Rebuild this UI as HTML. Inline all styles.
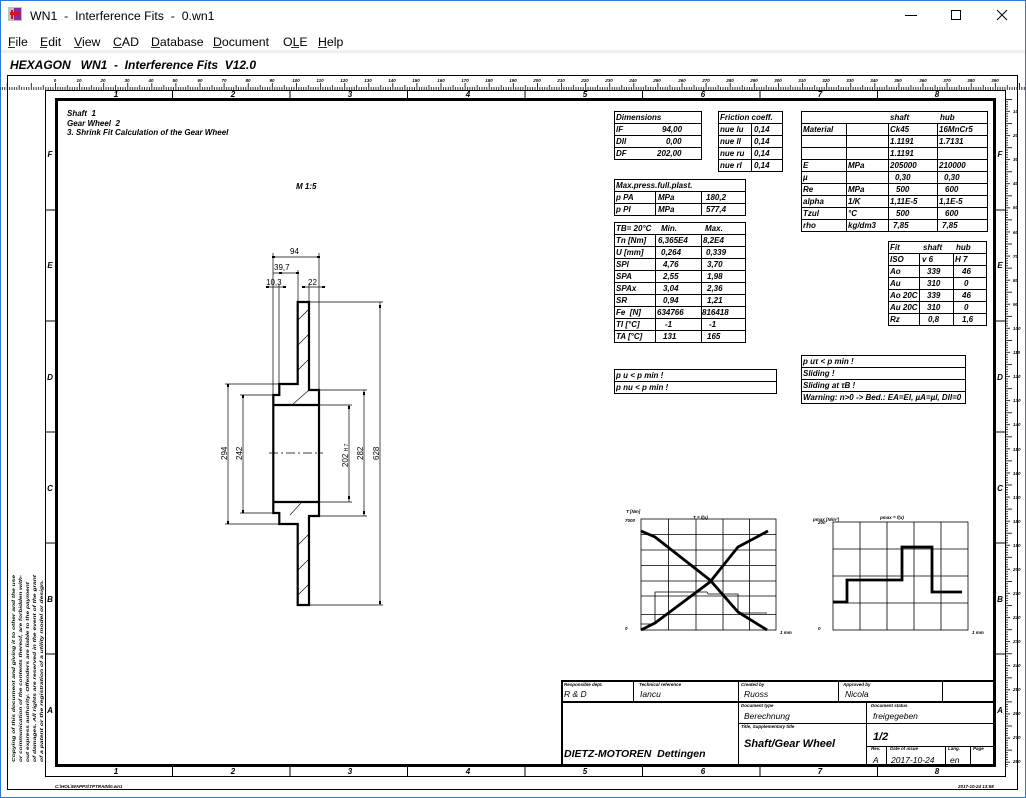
<!DOCTYPE html>
<html><head><meta charset="utf-8"><style>
html,body{margin:0;padding:0;background:#fff;width:1026px;height:798px;overflow:hidden}
svg{display:block}
text{font-family:"Liberation Sans",sans-serif;white-space:pre}
.t{font-size:8px;font-style:italic;font-weight:bold}
.s{font-size:4.5px;font-style:italic;font-weight:bold}
.m{font-size:12.3px}
</style></head><body>
<svg width="1026" height="798" viewBox="0 0 1026 798" xmlns="http://www.w3.org/2000/svg" xml:space="preserve">
<defs>
<pattern id="rt" patternUnits="userSpaceOnUse" x="55" y="0" width="24.1" height="100">
<g stroke="#000" stroke-width="0.8">
<line x1="0.4" y1="83" x2="0.4" y2="90"/><line x1="12.45" y1="85" x2="12.45" y2="90"/>
<line x1="2.81" y1="87" x2="2.81" y2="90"/><line x1="5.22" y1="87" x2="5.22" y2="90"/><line x1="7.63" y1="87" x2="7.63" y2="90"/><line x1="10.04" y1="87" x2="10.04" y2="90"/>
<line x1="14.86" y1="87" x2="14.86" y2="90"/><line x1="17.27" y1="87" x2="17.27" y2="90"/><line x1="19.68" y1="87" x2="19.68" y2="90"/><line x1="22.09" y1="87" x2="22.09" y2="90"/>
</g></pattern>
<pattern id="rr" patternUnits="userSpaceOnUse" x="0" y="99" width="1026" height="24.1">
<g stroke="#000" stroke-width="0.8">
<line x1="1005" y1="0.4" x2="1012" y2="0.4"/><line x1="1005" y1="12.45" x2="1010" y2="12.45"/>
<line x1="1005" y1="2.81" x2="1008" y2="2.81"/><line x1="1005" y1="5.22" x2="1008" y2="5.22"/><line x1="1005" y1="7.63" x2="1008" y2="7.63"/><line x1="1005" y1="10.04" x2="1008" y2="10.04"/>
<line x1="1005" y1="14.86" x2="1008" y2="14.86"/><line x1="1005" y1="17.27" x2="1008" y2="17.27"/><line x1="1005" y1="19.68" x2="1008" y2="19.68"/><line x1="1005" y1="22.09" x2="1008" y2="22.09"/>
</g></pattern>
</defs>
<rect x="0.5" y="0.5" width="1025" height="797" fill="#fff" stroke="#2b79d6"/>
<rect x="8" y="7" width="14" height="14" fill="#c0c0c0"/>
<rect x="14" y="8" width="7" height="12" fill="#8a2a9a"/>
<rect x="10" y="12" width="10" height="3" fill="#e01010"/>
<rect x="11" y="10" width="2" height="9" fill="#e01010"/>
<text x="30" y="20" class="m" font-size="13" fill="#000">WN1  -  Interference Fits  -  0.wn1</text>
<line x1="905" y1="15.5" x2="917" y2="15.5" stroke="#000"/>
<rect x="951.5" y="10.5" width="9" height="9" fill="none" stroke="#000"/>
<path d="M997 10 L1007 20 M1007 10 L997 20" stroke="#000"/>
<g class="m" fill="#000">
<text x="8" y="46">File</text><text x="40" y="46">Edit</text><text x="74" y="46">View</text><text x="113" y="46">CAD</text><text x="151" y="46">Database</text><text x="213" y="46">Document</text><text x="283" y="46">OLE</text><text x="318" y="46">Help</text>
</g>
<g stroke="#000" stroke-width="0.8"><line x1="8" y1="47.5" x2="15" y2="47.5"/><line x1="40" y1="47.5" x2="47" y2="47.5"/><line x1="74" y1="47.5" x2="82" y2="47.5"/><line x1="113" y1="47.5" x2="122" y2="47.5"/><line x1="151" y1="47.5" x2="160" y2="47.5"/><line x1="213" y1="47.5" x2="222" y2="47.5"/><line x1="291" y1="47.5" x2="299" y2="47.5"/><line x1="318" y1="47.5" x2="327" y2="47.5"/></g>
<rect x="1" y="50" width="1024" height="3" fill="#f0f0f0"/>
<text x="10" y="69" font-size="12" font-style="italic" font-weight="bold">HEXAGON   WN1  -  Interference Fits  V12.0</text>
<rect x="7.5" y="75.5" width="1010" height="714" fill="none" stroke="#000"/>
<rect x="0" y="78" width="1026" height="13" fill="url(#rt)"/>
<line x1="55" y1="90.5" x2="995" y2="90.5" stroke="#000"/>
<rect x="990" y="99" width="30" height="668" fill="url(#rr)"/>
<line x1="1005.5" y1="99" x2="1005.5" y2="776" stroke="#000"/>
<rect x="45.5" y="90.5" width="960" height="686" fill="none" stroke="#000"/>
<rect x="56.5" y="99.5" width="938" height="666" fill="none" stroke="#000" stroke-width="3"/>
<g stroke="#000" stroke-width="1">
<line x1="172.5" y1="91" x2="172.5" y2="99"/><line x1="290" y1="91" x2="290" y2="99"/><line x1="407.5" y1="91" x2="407.5" y2="99"/><line x1="525" y1="91" x2="525" y2="99"/><line x1="642.5" y1="91" x2="642.5" y2="99"/><line x1="760" y1="91" x2="760" y2="99"/><line x1="877.5" y1="91" x2="877.5" y2="99"/>
<line x1="172.5" y1="767" x2="172.5" y2="776"/><line x1="290" y1="767" x2="290" y2="776"/><line x1="407.5" y1="767" x2="407.5" y2="776"/><line x1="525" y1="767" x2="525" y2="776"/><line x1="642.5" y1="767" x2="642.5" y2="776"/><line x1="760" y1="767" x2="760" y2="776"/><line x1="877.5" y1="767" x2="877.5" y2="776"/>
<line x1="45" y1="210" x2="55" y2="210"/><line x1="45" y1="321" x2="55" y2="321"/><line x1="45" y1="432" x2="55" y2="432"/><line x1="45" y1="543" x2="55" y2="543"/><line x1="45" y1="654" x2="55" y2="654"/>
<line x1="996" y1="210" x2="1005" y2="210"/><line x1="996" y1="321" x2="1005" y2="321"/><line x1="996" y1="432" x2="1005" y2="432"/><line x1="996" y1="543" x2="1005" y2="543"/><line x1="996" y1="654" x2="1005" y2="654"/>
</g>
<g class="t" font-size="6.5" text-anchor="middle">
<text x="116" y="97">1</text><text x="233" y="97">2</text><text x="350" y="97">3</text><text x="468" y="97">4</text><text x="585" y="97">5</text><text x="703" y="97">6</text><text x="820" y="97">7</text><text x="937" y="97">8</text>
<text x="116" y="774">1</text><text x="233" y="774">2</text><text x="350" y="774">3</text><text x="468" y="774">4</text><text x="585" y="774">5</text><text x="703" y="774">6</text><text x="820" y="774">7</text><text x="937" y="774">8</text>
<text x="50" y="157">F</text><text x="50" y="268">E</text><text x="50" y="380">D</text><text x="50" y="491">C</text><text x="50" y="602">B</text><text x="50" y="713">A</text>
<text x="1000" y="157">F</text><text x="1000" y="268">E</text><text x="1000" y="380">D</text><text x="1000" y="491">C</text><text x="1000" y="602">B</text><text x="1000" y="713">A</text>
</g>
<g class="s" font-size="4" text-anchor="middle">
<text x="55" y="82">0</text><text x="79" y="82">10</text><text x="103" y="82">20</text><text x="127" y="82">30</text><text x="151" y="82">40</text><text x="175" y="82">50</text><text x="200" y="82">60</text><text x="224" y="82">70</text><text x="248" y="82">80</text><text x="272" y="82">90</text><text x="296" y="82">100</text><text x="320" y="82">110</text><text x="344" y="82">120</text><text x="368" y="82">130</text><text x="392" y="82">140</text><text x="416" y="82">150</text><text x="441" y="82">160</text><text x="465" y="82">170</text><text x="489" y="82">180</text><text x="513" y="82">190</text><text x="537" y="82">200</text><text x="561" y="82">210</text><text x="585" y="82">220</text><text x="609" y="82">230</text><text x="633" y="82">240</text><text x="657" y="82">250</text><text x="682" y="82">260</text><text x="706" y="82">270</text><text x="730" y="82">280</text><text x="754" y="82">290</text><text x="778" y="82">300</text><text x="802" y="82">310</text><text x="826" y="82">320</text><text x="850" y="82">330</text><text x="874" y="82">340</text><text x="898" y="82">350</text><text x="923" y="82">360</text><text x="947" y="82">370</text><text x="971" y="82">380</text><text x="995" y="82">390</text>
</g>
<g class="s" font-size="4">
<text x="1013" y="113">10</text><text x="1013" y="137">20</text><text x="1013" y="161">30</text><text x="1013" y="185">40</text><text x="1013" y="209">50</text><text x="1013" y="234">60</text><text x="1013" y="258">70</text><text x="1013" y="282">80</text><text x="1013" y="306">90</text><text x="1013" y="330">100</text><text x="1013" y="354">110</text><text x="1013" y="378">120</text><text x="1013" y="402">130</text><text x="1013" y="426">140</text><text x="1013" y="451">150</text><text x="1013" y="475">160</text><text x="1013" y="499">170</text><text x="1013" y="523">180</text><text x="1013" y="547">190</text><text x="1013" y="571">200</text><text x="1013" y="595">210</text><text x="1013" y="619">220</text><text x="1013" y="643">230</text><text x="1013" y="667">240</text><text x="1013" y="691">250</text><text x="1013" y="715">260</text><text x="1013" y="739">270</text><text x="1013" y="763">280</text>
</g>
<text x="55" y="788" class="s" font-size="5">C:\HOL\WAPPS\TPTRAIN\0.wn1</text>
<text x="958" y="788" class="s" font-size="5">2017-10-24 13:58</text>
<g transform="rotate(-90)" class="s" font-size="6.6" textLength="185">
<text x="-762" y="15" textLength="187" lengthAdjust="spacingAndGlyphs">Copying of this document and giving it to other and the use</text>
<text x="-762" y="22" textLength="187" lengthAdjust="spacingAndGlyphs">or communication of the contents thereof, are forbidden with-</text>
<text x="-762" y="29" textLength="180" lengthAdjust="spacingAndGlyphs">out express authority. Offenders are liable to the payment</text>
<text x="-762" y="36" textLength="187" lengthAdjust="spacingAndGlyphs">of damages. All rights are reserved in the event of the grant</text>
<text x="-762" y="43" textLength="182" lengthAdjust="spacingAndGlyphs">of a patent or the registration of a utility model or design.</text>
</g>
<g class="t" font-size="6">
<text x="67" y="116">Shaft  1</text>
<text x="67" y="126">Gear Wheel  2</text>
<text x="67" y="135">3. Shrink Fit Calculation of the Gear Wheel</text>
<text x="296" y="189">M 1:5</text>
</g>
<g fill="none" stroke="#000" stroke-width="0.8">
<g stroke-width="0.6">
<line x1="298" y1="320" x2="309" y2="309"/><line x1="298" y1="345" x2="309" y2="334"/><line x1="298" y1="370" x2="309" y2="359"/>
<line x1="292" y1="405" x2="309" y2="390"/><line x1="290" y1="515" x2="301" y2="503"/>
<line x1="298" y1="545" x2="309" y2="534"/><line x1="298" y1="570" x2="309" y2="559"/><line x1="298" y1="595" x2="309" y2="584"/>
</g>
<g stroke-width="0.7">
<line x1="273" y1="253" x2="273" y2="395"/><line x1="319" y1="253" x2="319" y2="390"/>
<line x1="273" y1="257" x2="319" y2="257"/>
<line x1="298" y1="270" x2="298" y2="302"/><line x1="273" y1="273" x2="298" y2="273"/>
<line x1="279" y1="284" x2="279" y2="384"/><line x1="267" y1="287" x2="285" y2="287"/>
<line x1="309" y1="284" x2="309" y2="302"/><line x1="302" y1="287" x2="325" y2="287"/>
<line x1="225" y1="384" x2="279" y2="384"/><line x1="225" y1="524" x2="279" y2="524"/><line x1="228" y1="384" x2="228" y2="524"/>
<line x1="240" y1="395" x2="273" y2="395"/><line x1="240" y1="513" x2="273" y2="513"/><line x1="243" y1="395" x2="243" y2="513"/>
<line x1="319" y1="405" x2="352" y2="405"/><line x1="319" y1="502" x2="352" y2="502"/><line x1="349" y1="405" x2="349" y2="502"/>
<line x1="319" y1="390" x2="367" y2="390"/><line x1="319" y1="516" x2="367" y2="516"/><line x1="364" y1="390" x2="364" y2="516"/>
<line x1="309" y1="302" x2="383" y2="302"/><line x1="309" y1="605" x2="383" y2="605"/><line x1="380" y1="302" x2="380" y2="605"/>
<line x1="269" y1="453" x2="323" y2="453" stroke-dasharray="9,3,2,3"/>
</g>
</g>
<g fill="#000">
<rect x="272" y="256" width="3" height="2"/><rect x="317" y="256" width="3" height="2"/><rect x="279" y="272" width="3" height="2"/><rect x="296" y="272" width="3" height="2"/>
<rect x="266" y="286" width="3" height="2"/><rect x="283" y="286" width="3" height="2"/><rect x="302" y="286" width="3" height="2"/><rect x="322" y="286" width="3" height="2"/>
<rect x="227" y="384" width="2" height="3"/><rect x="227" y="521" width="2" height="3"/><rect x="242" y="395" width="2" height="3"/><rect x="242" y="510" width="2" height="3"/>
<rect x="348" y="406" width="2" height="3"/><rect x="348" y="496" width="2" height="3"/><rect x="363" y="392" width="2" height="3"/><rect x="363" y="511" width="2" height="3"/><rect x="379" y="305" width="2" height="3"/><rect x="379" y="601" width="2" height="3"/>
</g>
<path d="M297.7 302 L309 302 L309 390 L319 390 L319 516 L309 516 L309 605 L297.7 605 L297.7 524 L279.3 524 L279.3 513 L273.3 513 L273.3 395 L279.3 395 L279.3 384 L297.7 384 Z M273.3 405 L319 405 M273.3 502 L319 502" fill="none" stroke="#000" stroke-width="2.2"/>
<g font-size="8" fill="#000">
<text x="290" y="254">94</text><text x="274" y="270">39,7</text><text x="266" y="285">10,3</text><text x="308" y="285">22</text>
<g transform="rotate(-90)"><text x="-460" y="227">294</text><text x="-460" y="242">242</text><text x="-467" y="348">202 <tspan font-size="5">H 7</tspan></text><text x="-460" y="363">282</text><text x="-460" y="379">628</text></g>
</g>
<g fill="none" stroke="#000" stroke-width="1">
<rect x="614.5" y="111.5" width="87" height="48"/><path d="M615 123.5H701M615 135.5H701M615 147.5H701"/>
<rect x="718.5" y="111.5" width="64" height="60"/><path d="M719 123.5H782M719 135.5H782M719 147.5H782M719 159.5H782M751.5 123V171"/>
<rect x="801.5" y="111.5" width="186" height="120"/><path d="M802 123.5H987M802 135.5H987M802 147.5H987M802 159.5H987M802 171.5H987M802 183.5H987M802 195.5H987M802 207.5H987M802 219.5H987M846.5 123V231M888.5 123V231M937.5 123V231"/>
<rect x="614.5" y="179.5" width="131" height="36"/><path d="M615 191.5H745M615 203.5H745M655.5 191V215M701.5 191V215"/>
<rect x="614.5" y="222.5" width="131" height="120"/><path d="M615 234.5H745M615 246.5H745M615 258.5H745M615 270.5H745M615 282.5H745M615 294.5H745M615 306.5H745M615 318.5H745M615 330.5H745M655.5 234V342M701.5 234V342"/>
<rect x="888.5" y="241.5" width="98" height="84"/><path d="M889 253.5H986M889 265.5H986M889 277.5H986M889 289.5H986M889 301.5H986M889 313.5H986M919.5 253V325M953.5 253V325"/>
<rect x="614.5" y="369.5" width="162" height="24"/><path d="M615 381.5H776"/>
<rect x="801.5" y="355.5" width="164" height="48"/><path d="M802 367.5H965M802 379.5H965M802 391.5H965"/>
</g>
<g class="t" font-size="7.3">
<text x="616" y="120">Dimensions</text>
<text x="616" y="132">lF</text><text x="662" y="132">94,00</text>
<text x="616" y="144">Dll</text><text x="666" y="144">0,00</text>
<text x="616" y="156">DF</text><text x="657" y="156">202,00</text>
<text x="720" y="120">Friction coeff.</text>
<text x="720" y="132">nue lu</text><text x="754" y="132">0,14</text>
<text x="720" y="144">nue ll</text><text x="754" y="144">0,14</text>
<text x="720" y="156">nue ru</text><text x="754" y="156">0,14</text>
<text x="720" y="168">nue rl</text><text x="754" y="168">0,14</text>
<text x="890" y="120">shaft</text><text x="940" y="120">hub</text>
<text x="803" y="132">Material</text><text x="890" y="132">Ck45</text><text x="939" y="132">16MnCr5</text>
<text x="890" y="144">1.1191</text><text x="939" y="144">1.7131</text>
<text x="890" y="156">1.1191</text>
<text x="803" y="168">E</text><text x="848" y="168">MPa</text><text x="890" y="168">205000</text><text x="939" y="168">210000</text>
<text x="803" y="180">µ</text><text x="895" y="180">0,30</text><text x="944" y="180">0,30</text>
<text x="803" y="192">Re</text><text x="848" y="192">MPa</text><text x="896" y="192">500</text><text x="945" y="192">600</text>
<text x="803" y="204">alpha</text><text x="848" y="204">1/K</text><text x="890" y="204">1,11E-5</text><text x="939" y="204">1,1E-5</text>
<text x="803" y="216">Tzul</text><text x="848" y="216">°C</text><text x="896" y="216">500</text><text x="945" y="216">600</text>
<text x="803" y="228">rho</text><text x="848" y="228">kg/dm3</text><text x="893" y="228">7,85</text><text x="942" y="228">7,85</text>
<text x="616" y="188">Max.press.full.plast.</text>
<text x="616" y="200">p PA</text><text x="658" y="200">MPa</text><text x="706" y="200">180,2</text>
<text x="616" y="212">p PI</text><text x="658" y="212">MPa</text><text x="706" y="212">577,4</text>
<text x="616" y="231">TB= 20°C</text><text x="661" y="231">Min.</text><text x="705" y="231">Max.</text>
<text x="616" y="243">Tn [Nm]</text><text x="658" y="243">6,365E4</text><text x="703" y="243">8,2E4</text>
<text x="616" y="255">U [mm]</text><text x="661" y="255">0,264</text><text x="706" y="255">0,339</text>
<text x="616" y="267">SPl</text><text x="663" y="267">4,76</text><text x="707" y="267">3,70</text>
<text x="616" y="279">SPA</text><text x="663" y="279">2,55</text><text x="707" y="279">1,98</text>
<text x="616" y="291">SPAx</text><text x="663" y="291">3,04</text><text x="707" y="291">2,36</text>
<text x="616" y="303">SR</text><text x="663" y="303">0,94</text><text x="707" y="303">1,21</text>
<text x="616" y="315">Fe  [N]</text><text x="657" y="315">634766</text><text x="702" y="315">816418</text>
<text x="616" y="327">Tl [°C]</text><text x="665" y="327">-1</text><text x="709" y="327">-1</text>
<text x="616" y="339">TA [°C]</text><text x="663" y="339">131</text><text x="707" y="339">165</text>
<text x="890" y="250">Fit</text><text x="923" y="250">shaft</text><text x="956" y="250">hub</text>
<text x="890" y="262">ISO</text><text x="922" y="262">v 6</text><text x="955" y="262">H 7</text>
<text x="890" y="274">Ao</text><text x="927" y="274">339</text><text x="962" y="274">46</text>
<text x="890" y="286">Au</text><text x="927" y="286">310</text><text x="964" y="286">0</text>
<text x="890" y="298">Ao 20C</text><text x="927" y="298">339</text><text x="962" y="298">46</text>
<text x="890" y="310">Au 20C</text><text x="927" y="310">310</text><text x="964" y="310">0</text>
<text x="890" y="322">Rz</text><text x="928" y="322">0,8</text><text x="962" y="322">1,6</text>
<text x="616" y="378">p u &lt; p min !</text>
<text x="616" y="390">p nu &lt; p min !</text>
<text x="803" y="364">p uτ &lt; p min !</text>
<text x="803" y="376">Sliding !</text>
<text x="803" y="388">Sliding at τB !</text>
<text x="803" y="400">Warning: n&gt;0 -&gt; Bed.: EA=El, µA=µl, Dll=0</text>
</g>
<g fill="none" stroke="#000" stroke-width="0.8">
<rect x="641" y="519" width="135" height="111"/>
<path d="M641 534.5H776M641 550H776M641 565.5H776M641 581H776M641 596H776M641 614.5H776M668.5 519V630M696 519V630M723 519V630M749.5 519V630"/>
<rect x="833" y="522" width="135" height="108"/>
<path d="M833 549H968M833 576H968M833 603H968M860 522V630M887 522V630M914 522V630M941 522V630"/>
<path d="M641 624H655V592H707L708 594H738V613H767"/>
</g>
<g fill="none" stroke="#000" stroke-width="2.8">
<path d="M641 531L655 537L710 580L738 612L767 630"/>
<path d="M641 630L655 623L710 582L738 547L768 531"/>
<path d="M833 602H847V580H902V547H932V592H962"/>
</g>
<g class="s" font-size="3.5">
<text x="626" y="513">T [Nm]</text><text x="693" y="519">T = f(x)</text>
<text x="813" y="521">pmax [N/m²]</text><text x="880" y="519">pmax = f(x)</text>
<text x="625" y="522">7000</text><text x="625" y="630">0</text><text x="818" y="524">200</text><text x="818" y="630">0</text>
<text x="780" y="634">1 mm</text><text x="972" y="634">1 mm</text>
</g>
<g fill="none" stroke="#000">
<rect x="562" y="681" width="433" height="85" stroke-width="2"/>
<path d="M562 702H995" stroke-width="2"/>
<path d="M633.5 681V702M738.5 681V766M838.5 681V702M942.5 681V702M866.5 702V766M738 723.5H995M866 746.5H995M886.5 746V766M945.5 746V766M970.5 746V766" stroke-width="1"/>
</g>
<g class="s">
<text x="564" y="686">Responsible dept.</text><text x="639" y="686">Technical reference</text><text x="741" y="686">Created by</text><text x="843" y="686">Approved by</text>
<text x="741" y="707">Document type</text><text x="871" y="707">Document status</text><text x="741" y="728">Title, Supplementary title</text>
<text x="871" y="750">Rev.</text><text x="890" y="750">Date of issue</text><text x="948" y="750">Lang.</text><text x="973" y="750">Page</text>
</g>
<g font-size="8.5" font-style="italic">
<text x="564" y="697">R &amp; D</text><text x="640" y="697">Iancu</text><text x="744" y="697">Ruoss</text><text x="845" y="697">Nicola</text>
<text x="744" y="719">Berechnung</text><text x="873" y="719">freigegeben</text>
<text x="873" y="763">A</text><text x="891" y="763">2017-10-24</text><text x="950" y="763">en</text>
</g>
<text x="873" y="740" font-size="11" font-style="italic" font-weight="bold">1/2</text>
<text x="744" y="747" font-size="11" font-style="italic" font-weight="bold">Shaft/Gear Wheel</text>
<text x="564" y="757" font-size="10.5" font-style="italic" font-weight="bold">DIETZ-MOTOREN  Dettingen</text>
</svg>
</body></html>
